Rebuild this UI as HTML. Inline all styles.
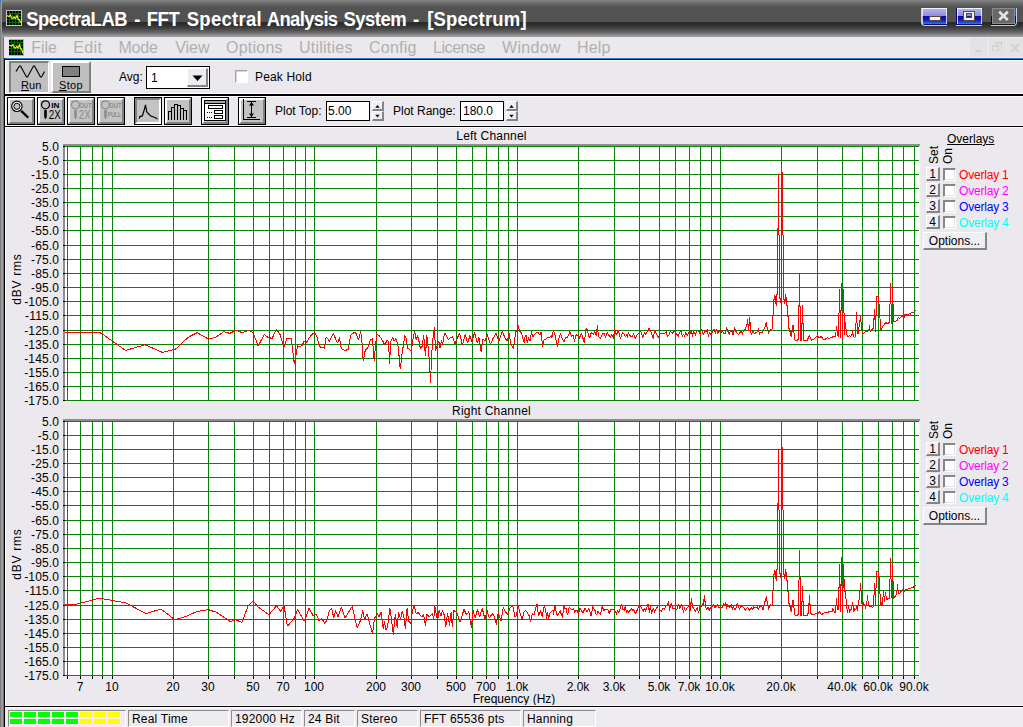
<!DOCTYPE html>
<html><head><meta charset="utf-8"><title>SpectraLAB - FFT Spectral Analysis System - [Spectrum]</title>
<style>
html,body{margin:0;padding:0;}
body{width:1023px;height:727px;overflow:hidden;background:#ebe9ed;font-family:"Liberation Sans",sans-serif;font-size:12px;color:#000;position:relative;}
#root{position:absolute;left:0;top:0;width:1023px;height:727px;overflow:hidden;background:#ebe9ed;}
.abs{position:absolute;}
.t{position:absolute;white-space:nowrap;line-height:14px;height:14px;}
.yl{position:absolute;left:0;width:59.2px;text-align:right;letter-spacing:0.17px;line-height:14px;height:14px;white-space:nowrap;}
.xl{position:absolute;width:60px;margin-left:-30px;text-align:center;line-height:14px;height:14px;white-space:nowrap;}
#title{left:2px;top:0;width:1023px;height:37px;background:linear-gradient(to bottom,#888 0px,#6c6c6c 3px,#5a5a5a 6px,#525252 8px,#525252 22px,#2a2a2a 22px,#2c2c2c 24px,#3a3a3a 27px,#505050 30px,#6e6e6e 33px,#8e8e8e 35px,#a4a4a4 37px);}
.tw{position:absolute;top:7.6px;height:24px;line-height:24px;font-weight:bold;color:#fff;font-size:18.5px;white-space:nowrap;transform:scaleY(1.08);transform-origin:0 19px;}
.menu{position:absolute;top:37px;height:21px;line-height:21px;font-size:16px;color:#b0b0b0;white-space:nowrap;}
.btn{position:absolute;background:#c3c3c3;box-sizing:border-box;}
.raised{border:2px solid;border-color:#fff #808080 #808080 #fff;}
.sunk{border:2px solid;border-color:#808080 #fff #fff #808080;}
.tb{position:absolute;top:97px;width:28px;height:28px;box-sizing:border-box;border:1px solid #000;background:#c3c3c3;}
.tb i{position:absolute;left:0;top:0;right:0;bottom:0;border:2px solid;border-color:#fff #808080 #808080 #fff;}
.tb.dn i{border-color:#808080 #fff #fff #808080;}
.tb svg{position:absolute;left:0;top:0;}
.sp{position:absolute;top:710px;height:17px;box-sizing:border-box;border:1px solid;border-color:#8c8c8c #fff #fff #8c8c8c;}
.sp span{position:absolute;left:3px;top:1px;line-height:14px;font-size:12px;white-space:nowrap;letter-spacing:0.2px;}
.cb{position:absolute;width:13px;height:13px;box-sizing:border-box;background:#fff;border:1px solid;border-color:#878787 #fff #fff #878787;box-shadow:inset 1px 1px 0 #878787, inset -1px -1px 0 #e6e4e8;}
.sb{position:absolute;width:14px;height:14px;box-sizing:border-box;background:#f0eef2;border-style:solid;border-width:1px 2px 2px 1px;border-color:#fff #858585 #858585 #fff;text-align:center;line-height:12px;font-size:12px;}
</style></head><body><div id="root">

<div class="abs" style="left:0;top:0;width:1px;height:727px;background:#7c7c7c"></div>
<div class="abs" style="left:1px;top:0;width:2px;height:727px;background:#9c9c9c"></div>
<div class="abs" style="left:3px;top:0;width:1px;height:727px;background:#707070"></div>
<div class="abs" style="left:0;top:0;width:1px;height:2px;background:#1878dc"></div>
<div id="title" class="abs"></div>
<svg class="abs" style="left:6px;top:10px" width="16" height="16" viewBox="0 0 16 16" shape-rendering="crispEdges">
<rect x="0" y="0" width="16" height="16" fill="#c8c8c8"/><rect x="1" y="1" width="14" height="14" fill="#000"/>
<path d="M3.5 1V15M6.5 1V15M9.5 1V15M12.5 1V15M1 3.5H15M1 6.5H15M1 9.5H15M1 12.5H15" stroke="#006a00" stroke-width="1"/>
<path d="M1 5.5L3 6.5L4.5 5L5.5 8L7 8.5L8 7L9.5 8.5L11 5.5L12 9L13.5 10L14.5 13" stroke="#f0f000" stroke-width="1.2" fill="none" shape-rendering="auto"/>
</svg>
<div class="tw" style="left:26.2px;letter-spacing:-0.49px">SpectraLAB</div>
<div class="tw" style="left:134.2px;letter-spacing:0.00px">-</div>
<div class="tw" style="left:146.7px;letter-spacing:-0.45px">FFT</div>
<div class="tw" style="left:186.7px;letter-spacing:0.28px">Spectral</div>
<div class="tw" style="left:266.7px;letter-spacing:-0.66px">Analysis</div>
<div class="tw" style="left:343.5px;letter-spacing:-0.53px">System</div>
<div class="tw" style="left:412.9px;letter-spacing:0.00px">-</div>
<div class="tw" style="left:427.2px;letter-spacing:0.20px">[Spectrum]</div>
<div class="abs" style="left:921px;top:8px;width:26px;height:18px;box-sizing:border-box;border-left:1px solid #b9d3f7;border-bottom:1px solid #b9d3f7;border-bottom-left-radius:4px;background:#0a0a70"></div>
<div class="abs" style="left:922px;top:8px;width:25px;height:16px;background:linear-gradient(to bottom,#f4f4ff 0,#f4f4ff 1px,#b2b2f0 1px,#8c8ce2 8px,#0a0a98 8px,#1818b4 12px,#1c48d8 14px,#2a7af0 16px);box-shadow:inset 1px 0 0 rgba(255,255,255,.75),inset -1px 0 0 rgba(255,255,255,.75)"></div>
<div class="abs" style="left:929px;top:16px;width:12px;height:5px;box-sizing:border-box;border:1px solid #5a4848;background:#f2f2f2"></div>
<div class="abs" style="left:956px;top:8px;width:26px;height:18px;box-sizing:border-box;border-bottom:1px solid #b9d3f7;background:#0a0a70"></div>
<div class="abs" style="left:957px;top:8px;width:25px;height:16px;background:linear-gradient(to bottom,#f4f4ff 0,#f4f4ff 1px,#b2b2f0 1px,#8c8ce2 8px,#0a0a98 8px,#1818b4 12px,#1c48d8 14px,#2a7af0 16px);box-shadow:inset 1px 0 0 rgba(255,255,255,.75),inset -1px 0 0 rgba(255,255,255,.75)"></div>
<div class="abs" style="left:963px;top:11px;width:12px;height:10px;box-sizing:border-box;border:1px solid #5a4848;background:#f2f2f2"></div>
<div class="abs" style="left:966px;top:13px;width:6px;height:5px;box-sizing:border-box;border:1px solid #5a4848;background:linear-gradient(to bottom,#8c8ce2 0,#8c8ce2 50%,#1414a8 50%)"></div>
<div class="abs" style="left:991px;top:8px;width:26px;height:18px;box-sizing:border-box;border-right:1px solid #b9d3f7;border-bottom:1px solid #b9d3f7;border-bottom-right-radius:4px;background:linear-gradient(to bottom,#555 0,#555 8px,#08084c 8px)"></div>
<div class="abs" style="left:992px;top:8px;width:23px;height:16px;box-sizing:border-box;border:1px solid #8c8c8c;background:#696969"></div>
<div class="abs" style="left:992px;top:24px;width:23px;height:1px;background:#101010"></div>
<svg class="abs" style="left:997px;top:10px" width="13" height="12"><path d="M2.200 1.800L10.800 10M10.800 1.800L2.200 10" stroke="#e4e4e4" stroke-width="2.600" fill="none"/></svg>

<div class="abs" style="left:4px;top:37px;width:1019px;height:21px;background:#ebe9ed"></div>
<svg class="abs" style="left:9px;top:39px" width="15" height="17" viewBox="0 0 15 17" shape-rendering="crispEdges">
<rect x="0" y="0" width="15" height="17" fill="#b0b0b0"/><rect x="0" y="1" width="14" height="15" fill="#000"/>
<path d="M2.5 1V16M5.5 1V16M8.5 1V16M11.5 1V16M0 3.5H14M0 6.5H14M0 9.5H14M0 12.5H14" stroke="#006a00" stroke-width="1"/>
<path d="M0 6L2.5 7L4 5.5L5 8.5L6.5 9L7.5 7.5L9 9L10.5 6L11.5 9.5L13 11L14 14.5" stroke="#f0f000" stroke-width="1.2" fill="none" shape-rendering="auto"/>
</svg>
<div class="menu" style="left:31.3px;letter-spacing:-0.09px">File</div>
<div class="menu" style="left:73.2px;letter-spacing:0.41px">Edit</div>
<div class="menu" style="left:118.4px;letter-spacing:-0.18px">Mode</div>
<div class="menu" style="left:175.3px;letter-spacing:-0.06px">View</div>
<div class="menu" style="left:226.0px;letter-spacing:0.23px">Options</div>
<div class="menu" style="left:299.0px;letter-spacing:0.24px">Utilities</div>
<div class="menu" style="left:369.0px;letter-spacing:0.25px">Config</div>
<div class="menu" style="left:433.0px;letter-spacing:-0.44px">License</div>
<div class="menu" style="left:502.0px;letter-spacing:0.32px">Window</div>
<div class="menu" style="left:577.0px;letter-spacing:0.20px">Help</div>
<div class="abs" style="left:970px;top:38px;width:17px;height:19px;background:#e4e2e6"></div>
<div class="abs" style="left:989px;top:38px;width:17px;height:19px;background:#e4e2e6"></div>
<div class="abs" style="left:1007px;top:38px;width:17px;height:19px;background:#e4e2e6"></div>
<div class="abs" style="left:975px;top:50px;width:6px;height:2px;background:#d4d4c4"></div>
<div class="abs" style="left:992px;top:45px;width:7px;height:6px;border:1px solid #d4d4c4;border-top-width:2px;box-sizing:border-box;"></div><div class="abs" style="left:995px;top:42px;width:7px;height:6px;border:1px solid #d4d4c4;border-top-width:2px;border-left:0;border-bottom:0;box-sizing:border-box;"></div>
<svg class="abs" style="left:1010px;top:43px" width="10" height="10"><path d="M1 1L9 9M9 1L1 9" stroke="#d4d4c4" stroke-width="2"/></svg>
<div class="abs" style="left:4px;top:58px;width:1019px;height:1px;background:#2a7ad8"></div>
<div class="abs" style="left:4px;top:59px;width:1019px;height:1px;background:#000"></div>
<div class="abs" style="left:4px;top:58px;width:1px;height:669px;background:#000"></div>
<div class="abs" style="left:5px;top:60px;width:1px;height:667px;background:#fff"></div>
<div class="abs" style="left:5px;top:60px;width:1018px;height:1px;background:#fff"></div>
<div class="abs" style="left:4px;top:94px;width:1019px;height:2px;background:#000"></div>
<div class="abs" style="left:4px;top:126px;width:1019px;height:1px;background:#000"></div>
<div class="abs" style="left:5px;top:93px;width:1018px;height:1px;background:#fff"></div>
<div class="abs" style="left:5px;top:96px;width:1018px;height:1px;background:#fff"></div>
<div class="abs" style="left:5px;top:125px;width:1018px;height:1px;background:#f8f7f9"></div>
<div class="abs" style="left:5px;top:127px;width:1018px;height:1px;background:#fff"></div>
<div class="btn" style="left:9px;top:61px;width:40px;height:32px;background:#c0c0c0;border-style:solid;border-width:2px 1px 1px 2px;border-color:#808080 #fff #fff #808080"></div>
<svg class="abs" style="left:9px;top:61px" width="40" height="32"><path d="M7 10.500 L10.500 5 L11.500 5 L17.500 16 L18.500 16 L24.500 5 L25.500 5 L31.500 16 L32.500 16 L35.500 10.500" stroke="#000" stroke-width="1.15" fill="none"/></svg>
<div class="t" style="left:21px;top:78px;font-size:11px;letter-spacing:0.1px"><u>R</u>un</div>
<div class="btn" style="left:51px;top:61px;width:40px;height:32px;background:#c0c0c0;border-style:solid;border-width:2px;border-color:#fff #808080 #808080 #fff"></div>
<div class="abs" style="left:62px;top:66px;width:18px;height:11px;box-sizing:border-box;border:1px solid #000;background:#808080"></div>
<div class="t" style="left:59px;top:78px;font-size:11px;letter-spacing:0.3px"><u>S</u>top</div>

<div class="t" style="left:119px;top:70px">Avg:</div>
<div class="abs" style="left:146px;top:66px;width:64px;height:23px;box-sizing:border-box;border:1px solid #000;background:#fff"></div>
<div class="t" style="left:151px;top:71px;font-size:12px">1</div>
<div class="abs" style="left:187px;top:68px;width:21px;height:19px;box-sizing:border-box;border-style:solid;border-width:1px 2px 2px 1px;border-color:#fff #858585 #858585 #fff;background:#eeecf0"></div>
<svg class="abs" style="left:192px;top:75px" width="11" height="7"><path d="M0.5 0.5H10.5L5.5 6Z" fill="#000"/></svg>
<div class="cb" style="left:235px;top:70px;width:13px;height:13px;border-color:#a4a4a4 #fff #fff #a4a4a4;box-shadow:inset 1px 1px 0 #d8d6da"></div>
<div class="t" style="left:255px;top:70px;letter-spacing:0.15px">Peak Hold</div>

<div class="tb " style="left:7px"><i></i><svg width="26" height="26" viewBox="0 0 26 26"><circle cx="8.9" cy="8.3" r="5.2" fill="#fff" stroke="#000" stroke-width="1.2"/><circle cx="8.900" cy="8.300" r="3.1" fill="#c3c3c3" stroke="#000" stroke-width="1"/><path d="M13.2 12.900L20.3 19.800" stroke="#000" stroke-width="2.3"/></svg></div>
<div class="tb " style="left:37px"><i></i><svg width="26" height="26" viewBox="0 0 26 26"><circle cx="7.5" cy="6.8" r="4" fill="none" stroke="#000" stroke-width="1.2"/><path d="M6.200 12H8.800V19L7.500 21.500L6.200 19Z" fill="#000"/><text x="13.2" y="9.500" font-size="7" font-weight="bold" fill="#000" font-family="Liberation Sans, sans-serif" textLength="8.200" lengthAdjust="spacingAndGlyphs">IN</text><text x="10.800" y="21.300" font-size="12" fill="#000" font-family="Liberation Sans, sans-serif" textLength="12" lengthAdjust="spacingAndGlyphs">2X</text></svg></div>
<div class="tb " style="left:67px"><i></i><svg width="26" height="26" viewBox="0 0 26 26"><circle cx="7.5" cy="6.8" r="4" fill="none" stroke="#8c8c8c" stroke-width="1.2"/><path d="M6.200 12H8.800V19L7.500 21.500L6.200 19Z" fill="#8c8c8c"/><text x="11.2" y="9.500" font-size="7" font-weight="bold" fill="#8c8c8c" font-family="Liberation Sans, sans-serif" textLength="12.500" lengthAdjust="spacingAndGlyphs">OUT</text><text x="10.800" y="21.300" font-size="12" fill="#8c8c8c" font-family="Liberation Sans, sans-serif" textLength="12" lengthAdjust="spacingAndGlyphs">2X</text></svg></div>
<div class="tb " style="left:97px"><i></i><svg width="26" height="26" viewBox="0 0 26 26"><circle cx="7.5" cy="6.8" r="4" fill="none" stroke="#8c8c8c" stroke-width="1.2"/><path d="M6.200 12H8.800V19L7.500 21.500L6.200 19Z" fill="#8c8c8c"/><text x="11.2" y="9.500" font-size="7" font-weight="bold" fill="#8c8c8c" font-family="Liberation Sans, sans-serif" textLength="12.500" lengthAdjust="spacingAndGlyphs">OUT</text><text x="9.800" y="18.900" font-size="7" font-weight="bold" fill="#8c8c8c" font-family="Liberation Sans, sans-serif" textLength="13.500" lengthAdjust="spacingAndGlyphs">FULL</text></svg></div>
<div class="tb dn" style="left:134px"><i></i><svg width="26" height="26" viewBox="0 0 26 26"><path d="M4.300 20.600L4.900 18.600L7.300 17.900L8.700 13.800L10.500 6.900L11.700 13.800L14.200 16.500L16.200 18.200L19.600 19.300L22.400 20.900" stroke="#000" stroke-width="1.2" fill="none"/></svg></div>
<div class="tb " style="left:164px"><i></i><svg width="26" height="26" viewBox="0 0 26 26"><path d="M3.500 22V13.500H6.500V22M6.500 13.500V9.500H9.500V22M9.500 9.500V6.500H12.500V22M12.500 7.500H15.500V22M15.500 10.500H18.500V22M18.500 12.500H21.500V22" stroke="#000" stroke-width="1" fill="none" shape-rendering="crispEdges"/></svg></div>
<div class="tb " style="left:201px"><i></i><svg width="26" height="26" viewBox="0 0 26 26"><rect x="2.500" y="2.500" width="21" height="20" fill="#fff" stroke="#000" stroke-width="1" shape-rendering="crispEdges"/><rect x="3" y="3" width="20" height="2" fill="#a4a4a4" shape-rendering="crispEdges"/><path d="M3 5.500H23" stroke="#000" shape-rendering="crispEdges"/><rect x="6.500" y="7.500" width="14" height="3" fill="#fff" stroke="#000" shape-rendering="crispEdges"/><rect x="12.500" y="12.500" width="8" height="3" fill="#fff" stroke="#000" shape-rendering="crispEdges"/><rect x="12.500" y="17.500" width="8" height="3" fill="#fff" stroke="#000" shape-rendering="crispEdges"/><path d="M5 14.500H10M5 19.500H10" stroke="#000" stroke-dasharray="1 1" shape-rendering="crispEdges"/></svg></div>
<div class="tb " style="left:238px"><i></i><svg width="26" height="26" viewBox="0 0 26 26"><path d="M4.500 1V21.500H21" stroke="#000" fill="none" shape-rendering="crispEdges"/><path d="M8 3.500H17M8 19.500H17M12.500 4V19" stroke="#000" fill="none" shape-rendering="crispEdges"/><path d="M10 7.500L12.500 4L15 7.500ZM10 15.500L12.500 19L15 15.500Z" fill="#000"/></svg></div>
<div class="t" style="left:275px;top:104px">Plot Top:</div>
<div class="abs" style="left:326px;top:101px;width:44px;height:20px;box-sizing:border-box;border:1px solid #000;background:#fff"></div>
<div class="t" style="left:328px;top:104px">5.00</div>
<div class="abs" style="left:372px;top:101px;width:12px;height:10px;box-sizing:border-box;border-style:solid;border-width:1px 2px 2px 1px;border-color:#fff #858585 #858585 #fff;background:#f0eef2"></div>
<div class="abs" style="left:372px;top:111px;width:12px;height:10px;box-sizing:border-box;border-style:solid;border-width:1px 2px 2px 1px;border-color:#fff #858585 #858585 #fff;background:#f0eef2"></div>
<svg class="abs" style="left:372px;top:101px" width="11" height="20"><path d="M3.300 6.700L5.500 3.900L7.700 6.700ZM3.300 13.800L5.500 16.600L7.700 13.800Z" fill="#000"/></svg>
<div class="t" style="left:393px;top:104px">Plot Range:</div>
<div class="abs" style="left:460px;top:101px;width:44px;height:20px;box-sizing:border-box;border:1px solid #000;background:#fff"></div>
<div class="t" style="left:463px;top:104px">180.0</div>
<div class="abs" style="left:506px;top:101px;width:12px;height:10px;box-sizing:border-box;border-style:solid;border-width:1px 2px 2px 1px;border-color:#fff #858585 #858585 #fff;background:#f0eef2"></div>
<div class="abs" style="left:506px;top:111px;width:12px;height:10px;box-sizing:border-box;border-style:solid;border-width:1px 2px 2px 1px;border-color:#fff #858585 #858585 #fff;background:#f0eef2"></div>
<svg class="abs" style="left:506px;top:101px" width="11" height="20"><path d="M3.300 6.700L5.500 3.900L7.700 6.700ZM3.300 13.800L5.500 16.600L7.700 13.800Z" fill="#000"/></svg>

<svg class="abs" style="left:0;top:0" width="1023" height="727" viewBox="0 0 1023 727">
<rect x="65" y="146" width="854" height="255" fill="#fff"/>
<rect x="65" y="401" width="854" height="1" fill="#f4edf5"/>
<rect x="919" y="146" width="1" height="256" fill="#f6f5f7"/>
<rect x="920" y="146" width="1" height="256" fill="#eeecf0"/>
<rect x="63" y="144" width="857" height="2" fill="#908d91"/>
<rect x="63" y="144" width="2" height="257" fill="#908d91"/>
<path d="M65 146.5H919M65 160.5H919M65 174.5H919M65 188.5H919M65 202.5H919M65 216.5H919M65 230.5H919M65 245.5H919M65 259.5H919M65 273.5H919M65 287.5H919M65 301.5H919M65 315.5H919M65 330.5H919M65 344.5H919M65 358.5H919M65 372.5H919M65 386.5H919M65 400.5H919M67.5 146V401M80.5 146V401M92.5 146V401M102.5 146V401M112.5 146V401M173.5 146V401M208.5 146V401M234.5 146V401M253.5 146V401M269.5 146V401M283.5 146V401M295.5 146V401M305.5 146V401M314.5 146V401M376.5 146V401M411.5 146V401M437.5 146V401M456.5 146V401M472.5 146V401M486.5 146V401M498.5 146V401M508.5 146V401M517.5 146V401M578.5 146V401M614.5 146V401M639.5 146V401M659.5 146V401M675.5 146V401M689.5 146V401M700.5 146V401M711.5 146V401M720.5 146V401M781.5 146V401M817.5 146V401M842.5 146V401M862.5 146V401M878.5 146V401M892.5 146V401M903.5 146V401M914.5 146V401" stroke="#078207" stroke-width="1" fill="none" shape-rendering="crispEdges"/>
<path d="M63 146.5H65M63 160.5H65M63 174.5H65M63 188.5H65M63 202.5H65M63 216.5H65M63 230.5H65M63 245.5H65M63 259.5H65M63 273.5H65M63 287.5H65M63 301.5H65M63 315.5H65M63 330.5H65M63 344.5H65M63 358.5H65M63 372.5H65M63 386.5H65M63 400.5H65" stroke="#000" stroke-width="1" fill="none" shape-rendering="crispEdges"/>
<path d="M64.5 332.4 L99.4 332.4 L103.2 334.6 L112.1 341.0 L125.6 350.4 L145.1 344.8 L162.4 352.4 L175.6 349.1 L188.3 337.2 L197.2 332.6 L208.2 339.0 L215.0 337.7 L223.9 331.6 L229.8 333.4 L235.9 330.3 L242.2 332.6 L248.8 330.3 L253.1 332.6 L258.2 346.1 L264.1 334.6 L267.9 337.2 L272.2 338.5 L276.3 329.0 L280.1 334.6 L283.9 347.3 L286.9 338.5 L291.3 338.5 L294.3 364.4 L297.6 345.6 L300.0 346.9 L302.2 345.2 L304.3 340.9 L306.0 343.0 L310.8 335.5 L314.6 332.3 L316.8 336.6 L319.4 346.2 L321.5 347.7 L323.2 346.9 L324.3 348.4 L326.2 337.0 L328.0 338.7 L329.5 341.3 L333.3 333.3 L335.5 338.7 L337.6 343.0 L339.4 337.6 L341.3 348.4 L344.7 350.5 L348.4 349.5 L350.5 335.5 L354.4 332.3 L355.9 333.3 L358.5 339.8 L360.6 331.2 L361.9 340.9 L363.2 361.3 L365.2 350.5 L367.1 348.4 L368.4 346.2 L370.5 339.8 L372.5 338.7 L374.2 361.3 L375.7 343.0 L377.0 334.4 L379.6 336.1 L381.7 339.1 L384.9 345.2 L387.1 339.8 L388.6 341.9 L389.5 364.1 L390.8 341.9 L392.5 337.6 L394.2 340.9 L395.7 338.7 L397.8 344.1 L399.4 359.1 L400.2 369.2 L402.2 352.7 L404.9 335.5 L406.5 338.7 L407.5 348.4 L409.7 349.5 L411.4 351.6 L412.3 343.0 L414.6 330.8 L416.1 339.8 L417.8 335.5 L420.4 348.4 L422.2 346.2 L423.7 335.5 L425.4 355.9 L426.9 335.5 L428.4 349.5 L429.5 362.4 L430.5 383.4 L431.6 355.9 L432.9 338.7 L434.4 327.5 L435.5 350.5 L437.0 346.2 L438.7 340.9 L440.2 348.4 L441.5 339.8 L442.6 345.2 L444.5 332.7 L446.2 335.5 L448.4 339.8 L450.5 337.6 L452.7 336.6 L454.8 344.1 L457.0 338.7 L459.6 333.3 L462.4 345.2 L465.2 334.4 L467.7 343.0 L469.9 335.5 L472.0 341.9 L474.6 332.3 L477.4 343.0 L478.9 337.6 L481.1 351.6 L482.8 338.7 L484.9 340.9 L487.1 334.4 L490.3 344.1 L493.5 337.6 L496.1 333.3 L498.9 340.9 L502.2 331.2 L505.4 338.7 L507.5 340.9 L509.0 333.3 L510.8 344.1 L513.3 348.4 L516.1 330.1 L516.4 331.6 L517.6 330.9 L518.3 325.4 L519.5 330.9 L521.5 332.8 L522.6 337.9 L524.4 343.4 L525.2 335.5 L526.2 334.8 L527.3 343.4 L528.5 337.5 L530.1 341.4 L531.6 331.2 L532.6 337.1 L534.4 334.8 L536.5 332.4 L538.3 332.6 L539.7 335.2 L541.0 332.4 L542.6 346.5 L543.5 340.2 L545.3 339.8 L547.3 337.5 L549.6 337.5 L551.2 335.5 L551.8 338.3 L553.1 331.2 L554.5 332.8 L555.9 339.5 L557.4 346.5 L558.8 338.7 L560.4 333.6 L562.1 338.3 L564.3 342.2 L565.6 337.1 L567.6 337.1 L569.9 331.6 L571.7 336.7 L573.1 334.8 L574.5 341.4 L576.0 334.8 L577.8 335.5 L579.3 338.7 L581.3 332.8 L583.2 339.1 L584.4 343.4 L585.6 330.5 L586.5 327.7 L587.9 332.4 L589.5 338.3 L591.2 332.8 L593.4 334.4 L595.0 331.6 L596.4 335.5 L596.8 330.5 L597.6 325.4 L598.2 335.5 L600.3 338.7 L602.3 334.0 L604.2 332.8 L605.5 337.5 L607.3 332.4 L608.9 335.5 L610.5 337.5 L611.6 334.0 L613.6 338.7 L614.6 328.5 L616.5 335.2 L618.3 330.5 L620.4 338.7 L622.4 332.6 L624.1 334.4 L625.6 336.5 L626.6 334.4 L627.4 337.5 L628.4 332.6 L630.4 336.3 L632.4 337.1 L633.5 333.6 L635.5 338.7 L637.0 334.8 L638.6 333.6 L640.6 331.2 L642.9 337.5 L644.5 332.6 L645.6 334.4 L648.0 330.5 L649.0 328.5 L650.7 331.6 L652.1 335.2 L653.5 338.7 L654.5 330.5 L656.2 333.6 L658.5 337.5 L660.1 333.6 L662.5 333.4 L664.8 333.4 L666.2 331.6 L667.5 336.5 L669.1 334.8 L670.3 331.6 L672.2 333.4 L674.6 330.9 L676.9 334.3 L678.4 336.5 L679.6 332.1 L681.0 331.4 L682.5 336.5 L683.5 333.8 L684.5 336.5 L685.9 332.6 L687.4 336.3 L688.6 332.6 L689.7 334.6 L691.5 330.4 L692.5 336.5 L693.5 330.7 L695.5 335.6 L696.4 331.6 L697.4 330.4 L699.4 331.9 L700.4 335.6 L701.3 329.2 L702.8 333.1 L703.5 334.6 L704.5 330.7 L705.7 332.1 L707.3 329.2 L708.4 336.5 L709.4 332.4 L711.3 335.6 L712.6 331.2 L714.3 329.2 L715.4 333.4 L716.5 329.2 L717.5 333.4 L718.9 331.6 L720.4 329.4 L721.6 332.4 L722.2 330.6 L723.6 333.6 L725.4 333.3 L726.4 327.4 L727.4 330.0 L729.2 334.4 L730.7 330.6 L731.8 330.9 L733.3 335.3 L734.5 327.4 L735.6 330.9 L738.6 334.7 L741.2 330.6 L742.4 334.4 L743.3 331.2 L744.6 329.2 L745.6 330.3 L746.4 324.5 L747.1 324.5 L747.4 319.5 L748.1 324.5 L748.8 330.6 L749.4 317.4 L750.3 324.5 L750.7 332.4 L751.5 334.4 L752.7 331.2 L754.4 333.6 L756.5 332.4 L757.6 331.2 L758.5 328.3 L759.4 334.4 L760.9 331.8 L762.3 332.7 L764.4 328.6 L765.6 324.8 L766.4 322.4 L766.9 326.8 L767.6 327.4 L768.4 333.6 L769.7 330.9 L771.1 329.5 L772.5 328.6 L772.5 315.0 L773.5 315.0 L773.5 299.0 L774.5 299.0 L774.5 295.0 L775.5 298.0 L775.5 302.6 L776.5 305.6 L776.5 294.0 L777.5 294.0 L777.5 228.0 L778.5 228.0 L778.5 174.0 L778.5 235.0 L779.5 235.0 L779.5 298.7 L780.5 298.2 L780.5 302.6 L781.5 298.0 L781.5 233.0 L782.5 233.0 L782.5 172.0 L782.5 235.0 L783.5 235.0 L783.5 299.3 L784.5 299.0 L784.5 303.9 L785.5 299.3 L785.5 294.0 L786.5 299.0 L786.5 305.7 L787.5 305.7 L787.5 316.6 L788.5 316.6 L788.5 328.2 L789.5 328.2 L789.5 331.5 L790.5 331.5 L790.5 334.8 L791.5 336.4 L791.5 331.0 L792.5 331.0 L792.5 326.0 L793.5 325.0 L793.5 333.0 L794.5 333.0 L794.5 339.2 L795.5 340.3 L796.5 341.0 L797.5 340.0 L798.5 339.7 L798.5 305.0 L799.5 306.8 L799.5 273.8 L799.5 306.8 L800.5 306.8 L800.5 340.8 L801.5 340.8 L801.5 323.0 L802.5 323.0 L802.5 305.0 L802.5 323.0 L803.5 323.0 L803.5 340.3 L804.5 340.0 L805.5 340.5 L807.0 340.8 L809.5 335.3 L811.5 340.3 L813.7 339.2 L815.9 337.0 L817.5 335.3 L819.0 338.0 L821.4 336.4 L823.0 339.2M823.0 339.2 L825.5 339.1 L827.5 337.8 L829.6 338.4 L830.5 337.7 L832.5 337.0 L834.5 336.7 L835.5 336.7M847.5 337.2 L849.5 335.8 L851.0 336.2 L852.5 333.8M862.5 333.3 L863.7 333.3 L865.7 331.0 L867.0 331.9 L868.5 329.5 L869.5 329.5 L870.5 331.4 L871.5 330.5 L872.5 328.5 L873.5 328.0M880.5 329.5 L881.5 329.5 L882.5 327.1 L883.5 325.6 L884.8 323.7 L886.0 322.7 L887.7 323.7 L888.6 322.7 L889.5 322.3M893.5 321.3 L894.5 321.8 L895.9 321.3 L897.3 320.3 L898.3 317.4 L899.7 318.4 L901.2 317.0 L902.6 316.0 L903.6 314.6 L904.5 314.6M904.5 314.6 L905.5 314.6 L906.7 314.3 L908.0 315.2 L909.4 313.6 L910.5 314.2 L911.5 312.3 L913.0 312.8 L914.9 310.9 L916.3 310.2M835.5 331.9V337.0M836.5 326.1V331.4M837.5 331.4V336.2M838.5 313.1V336.7M839.5 289.0V313.1M840.5 310.2V337.7M841.5 282.9V310.7M842.5 311.2V338.7M843.5 289.0V313.1M844.5 313.0V335.3M845.5 322.3V328.5M846.5 328.5V335.3M847.5 335.3V337.2M852.5 329.5V333.8M853.5 333.8V336.7M854.5 336.7V337.7M855.5 323.2V337.0M856.5 312.1V323.2M857.5 323.0V333.8M858.5 327.0V333.8M859.5 319.9V327.0M860.5 316.0V322.3M861.5 322.3V330.9M862.5 330.9V333.3M869.5 325.2V329.5M873.5 317.9V328.0M874.5 309.3V320.3M875.5 314.6V331.9M876.5 296.2V314.6M877.5 296.2V297.2M878.5 296.2V303.5M879.5 303.5V318.4M880.5 319.4V329.5M889.5 303.5V322.3M890.5 283.2V304.0M891.5 304.0V323.7M892.5 288.0V304.4M893.5 304.4V321.3M904.5 314.6V318.4" stroke="#ff0000" stroke-width="1" fill="none" stroke-linejoin="bevel" shape-rendering="crispEdges"/>
<rect x="65" y="421" width="854" height="255" fill="#fff"/>
<rect x="65" y="676" width="854" height="1" fill="#f4edf5"/>
<rect x="919" y="421" width="1" height="256" fill="#f6f5f7"/>
<rect x="920" y="421" width="1" height="256" fill="#eeecf0"/>
<rect x="63" y="419" width="857" height="2" fill="#908d91"/>
<rect x="63" y="419" width="2" height="257" fill="#908d91"/>
<path d="M65 421.5H919M65 435.5H919M65 449.5H919M65 463.5H919M65 477.5H919M65 491.5H919M65 505.5H919M65 520.5H919M65 534.5H919M65 548.5H919M65 562.5H919M65 576.5H919M65 590.5H919M65 605.5H919M65 619.5H919M65 633.5H919M65 647.5H919M65 661.5H919M65 675.5H919M67.5 421V676M80.5 421V676M92.5 421V676M102.5 421V676M112.5 421V676M173.5 421V676M208.5 421V676M234.5 421V676M253.5 421V676M269.5 421V676M283.5 421V676M295.5 421V676M305.5 421V676M314.5 421V676M376.5 421V676M411.5 421V676M437.5 421V676M456.5 421V676M472.5 421V676M486.5 421V676M498.5 421V676M508.5 421V676M517.5 421V676M578.5 421V676M614.5 421V676M639.5 421V676M659.5 421V676M675.5 421V676M689.5 421V676M700.5 421V676M711.5 421V676M720.5 421V676M781.5 421V676M817.5 421V676M842.5 421V676M862.5 421V676M878.5 421V676M892.5 421V676M903.5 421V676M914.5 421V676" stroke="#078207" stroke-width="1" fill="none" shape-rendering="crispEdges"/>
<path d="M63 421.5H65M63 435.5H65M63 449.5H65M63 463.5H65M63 477.5H65M63 491.5H65M63 505.5H65M63 520.5H65M63 534.5H65M63 548.5H65M63 562.5H65M63 576.5H65M63 590.5H65M63 605.5H65M63 619.5H65M63 633.5H65M63 647.5H65M63 661.5H65M63 675.5H65" stroke="#000" stroke-width="1" fill="none" shape-rendering="crispEdges"/>
<path d="M64.5 604.6 L75.2 604.6 L99.4 598.2 L125.6 602.8 L145.9 613.5 L161.1 609.1 L174.9 619.8 L185.8 616.5 L197.2 611.4 L208.2 609.6 L216.3 612.2 L230.3 621.6 L235.4 619.8 L242.0 622.3 L248.1 605.8 L253.1 600.7 L258.2 607.1 L268.9 614.7 L276.5 605.8 L280.6 611.4 L284.1 605.8 L287.4 626.2 L293.8 619.0 L297.6 609.6 L300.0 613.7 L304.3 621.2 L309.0 608.3 L313.3 615.9 L316.1 614.4 L319.4 621.2 L321.5 618.0 L324.7 623.4 L326.9 620.2 L329.5 610.5 L331.6 608.3 L333.8 618.0 L335.5 610.5 L338.1 616.9 L341.3 607.3 L345.2 618.0 L349.0 611.6 L352.3 606.2 L354.8 618.0 L357.2 627.7 L360.2 621.2 L362.8 610.5 L364.5 620.2 L367.1 613.7 L369.9 624.5 L372.5 633.5 L374.6 618.0 L377.4 613.7 L379.1 616.9 L381.1 611.6 L383.2 628.8 L384.5 621.2 L385.6 629.8 L387.5 627.7 L389.9 608.3 L391.4 619.1 L393.3 634.6 L395.3 613.7 L397.2 627.7 L398.5 612.6 L400.6 619.1 L402.2 611.6 L403.9 616.9 L405.4 628.8 L407.1 608.3 L408.6 621.2 L410.8 623.4 L412.3 611.6 L414.0 605.1 L416.1 613.7 L418.3 612.6 L421.5 616.9 L423.7 614.8 L425.4 625.5 L426.9 613.7 L429.0 616.9 L432.3 613.7 L433.8 619.1 L434.8 606.2 L436.6 615.9 L437.6 621.2 L439.1 610.5 L440.9 615.9 L442.4 610.5 L444.1 614.8 L445.8 626.6 L447.5 612.6 L449.5 625.5 L451.2 611.6 L452.3 626.6 L453.8 610.5 L457.0 612.6 L460.2 622.3 L463.9 609.4 L466.7 614.8 L468.8 611.6 L471.4 627.7 L473.1 610.5 L475.3 618.0 L477.4 609.4 L479.6 616.9 L482.2 608.3 L484.9 619.1 L487.1 610.5 L489.2 618.0 L492.5 613.7 L494.6 616.9 L496.3 624.5 L498.3 612.6 L501.1 621.2 L503.2 607.3 L505.4 611.6 L507.5 614.8 L510.3 607.3 L512.9 606.2 L515.1 616.9 L516.4 615.2 L518.3 606.6 L519.9 612.5 L522.3 619.5 L523.8 612.5 L525.2 610.5 L527.3 612.5 L529.3 616.0 L530.5 621.5 L532.4 613.7 L534.4 614.5 L535.5 607.8 L537.0 604.4 L538.7 616.4 L540.4 610.5 L542.4 617.2 L543.5 607.8 L544.5 605.5 L546.1 613.7 L546.6 618.8 L547.7 611.7 L548.4 619.5 L549.6 613.7 L551.8 611.3 L553.1 609.8 L553.5 614.5 L554.9 605.5 L556.7 614.5 L557.8 615.2 L560.2 610.5 L561.3 614.5 L562.5 617.6 L563.7 605.9 L564.9 608.6 L566.0 607.8 L567.4 615.2 L569.2 607.6 L572.3 610.2 L573.5 607.8 L574.6 612.5 L576.0 609.8 L577.8 611.3 L578.5 616.0 L579.7 607.8 L581.7 611.3 L583.4 613.3 L584.6 607.8 L587.1 612.1 L588.7 607.8 L591.2 616.4 L592.8 606.6 L595.0 610.5 L596.4 615.2 L598.0 611.5 L600.5 614.5 L601.6 608.6 L602.6 605.5 L603.4 611.3 L604.6 609.5 L607.7 609.5 L609.4 613.7 L610.5 609.8 L613.6 609.8 L615.2 611.3 L616.5 614.5 L617.5 609.8 L618.7 613.3 L620.2 608.6 L621.4 604.4 L623.0 609.4 L624.5 610.5 L625.3 605.5 L626.5 613.3 L627.3 609.8 L628.4 612.5 L630.0 610.5 L631.6 608.6 L632.7 610.9 L633.9 609.8 L635.5 613.7 L637.4 609.8 L639.0 606.2 L640.4 605.5 L641.7 608.6 L643.3 611.5 L644.6 607.8 L645.6 611.5 L646.8 607.4 L648.0 604.4 L649.6 612.5 L650.3 605.5 L651.5 613.7 L653.5 607.8 L654.5 612.5 L656.2 608.6 L657.8 606.2 L659.5 605.1 L659.7 609.8 L661.3 611.5 L663.2 607.8 L664.4 609.8 L665.6 605.9 L667.3 605.5 L668.5 601.6 L669.5 610.5 L671.2 603.5 L673.0 608.6 L676.9 609.1 L678.5 604.4 L679.6 608.4 L680.6 607.6 L681.5 604.3 L682.5 607.1 L683.5 612.5 L684.5 607.6 L685.4 611.3 L686.7 608.6 L688.6 606.4 L689.6 608.6 L690.5 610.6 L690.6 604.4 L691.5 598.3 L692.0 603.5 L692.8 603.7 L693.0 607.6 L695.5 611.5 L696.4 608.6 L697.4 607.6 L698.4 612.5 L699.6 609.6 L700.0 605.7 L701.3 606.4 L702.8 603.5 L703.5 605.2 L703.8 600.3 L704.5 595.4 L704.8 601.3 L705.6 601.5 L705.7 607.6 L706.5 609.6 L707.7 607.1 L708.4 607.9 L709.4 610.6 L710.1 607.1 L711.5 610.6 L711.8 607.9 L712.6 605.7 L713.4 604.3 L714.5 607.1 L715.5 607.4 L717.5 604.3 L718.9 607.4 L720.4 608.4 L721.6 607.4 L721.9 606.8 L722.5 608.3 L723.5 603.6 L724.5 606.2 L725.4 602.4 L726.3 605.6 L726.6 609.4 L727.4 604.5 L728.6 605.9 L729.8 607.4 L731.4 604.5 L732.4 609.4 L733.3 606.5 L734.5 609.2 L735.4 610.3 L736.5 605.6 L737.4 603.3 L738.6 606.8 L739.5 609.4 L740.6 606.5 L742.1 606.2 L744.2 608.0 L745.3 610.3 L747.4 607.4 L749.4 610.3 L751.5 607.7 L752.5 610.3 L753.5 606.8 L756.5 608.0 L757.3 606.2 L758.3 609.4 L759.7 606.8 L761.5 605.6 L762.6 609.4 L763.5 609.2 L764.6 602.4 L765.6 600.4 L766.4 596.2 L766.9 600.9 L767.6 601.5 L768.4 609.4 L769.7 606.2 L770.8 604.5 L771.7 605.9 L772.5 603.6 L772.5 590.0 L773.5 590.0 L773.5 574.0 L774.5 574.0 L774.5 570.0 L775.5 573.0 L775.5 577.6 L776.5 580.6 L776.5 569.0 L777.5 569.0 L777.5 503.0 L778.5 503.0 L778.5 449.0 L778.5 510.0 L779.5 510.0 L779.5 573.7 L780.5 573.2 L780.5 577.6 L781.5 573.0 L781.5 508.0 L782.5 508.0 L782.5 447.0 L782.5 510.0 L783.5 510.0 L783.5 574.3 L784.5 574.0 L784.5 578.9 L785.5 574.3 L785.5 569.0 L786.5 574.0 L786.5 580.7 L787.5 580.7 L787.5 591.6 L788.5 591.6 L788.5 603.2 L789.5 603.2 L789.5 606.5 L790.5 606.5 L790.5 609.8 L791.5 611.4 L791.5 606.0 L792.5 606.0 L792.5 601.0 L793.5 600.0 L793.5 608.0 L794.5 608.0 L794.5 614.2 L795.5 615.3 L796.5 616.0 L797.5 615.0 L798.5 614.7 L798.5 582.9 L799.5 577.0 L799.5 550.1 L799.5 577.0 L800.5 577.0 L800.5 615.8 L801.5 615.8 L801.5 601.0 L802.5 601.0 L802.5 586.2 L802.5 601.0 L803.5 601.0 L803.5 615.3 L804.5 615.0 L805.5 615.5 L807.0 615.8 L808.5 612.5 L808.5 603.7 L809.5 603.7 L809.5 595.0 L809.5 604.8 L810.5 604.8 L810.5 613.0 L812.0 614.7 L814.0 615.0 L815.9 613.0 L817.5 614.8 L819.4 611.4 L821.4 615.0 L823.0 613.6M823.0 613.6 L825.5 612.0 L827.6 612.7 L829.6 611.0 L830.5 611.2 L831.5 611.2 L832.5 611.0M832.5 608.3 L833.5 610.3 L834.5 612.2 L835.5 612.0M849.5 612.7 L850.5 609.8 L851.5 609.8M868.5 605.9 L869.9 606.4 L871.3 606.0 L872.5 607.4 L873.5 606.4M886.5 599.7 L887.7 598.7 L888.6 598.2 L889.5 598.2M893.5 598.7 L894.5 597.3 L895.9 594.9 L896.5 594.0M898.5 594.4 L899.5 593.4 L900.7 592.0 L902.1 589.6 L903.6 591.0 L904.6 592.0 L905.5 589.6 L906.7 590.0 L908.0 589.0 L909.4 588.0 L910.5 588.5 L911.5 587.3 L913.0 587.6 L914.9 585.9 L916.3 585.2M832.5 608.3V611.0M835.5 605.5V612.0M836.5 598.2V606.0M837.5 606.0V609.8M838.5 587.1V609.8M839.5 564.0V587.6M840.5 584.3V611.7M841.5 557.0V585.7M842.5 585.7V613.7M843.5 564.0V588.1M844.5 578.5V591.5M845.5 590.5V598.7M846.5 599.2V608.8M847.5 608.8V612.7M848.5 605.5V609.3M849.5 609.3V612.7M851.5 606.4V609.8M852.5 602.1V606.4M853.5 606.4V611.7M854.5 607.9V611.0M855.5 608.8V610.3M856.5 604.5V608.8M857.5 606.0V610.8M858.5 600.2V606.0M859.5 590.5V600.2M860.5 583.3V590.5M861.5 590.5V603.5M862.5 603.5V609.8M863.5 602.1V605.5M864.5 603.5V605.0M865.5 605.0V608.8M866.5 601.1V606.4M867.5 595.3V601.1M868.5 601.1V605.9M873.5 595.3V606.4M874.5 583.3V595.3M875.5 587.6V605.0M876.5 571.2V588.1M877.5 571.2V572.2M878.5 571.2V577.0M879.5 577.0V593.9M880.5 593.9V605.5M881.5 601.6V605.5M882.5 597.3V604.5M883.5 590.5V597.3M884.5 595.8V601.6M885.5 592.4V596.3M886.5 596.3V599.7M889.5 578.5V598.2M890.5 558.2V578.5M891.5 578.5V598.2M892.5 562.6V580.9M893.5 581.4V598.7M896.5 589.6V594.0M897.5 584.3V589.6M898.5 589.6V594.4" stroke="#ff0000" stroke-width="1" fill="none" stroke-linejoin="bevel" shape-rendering="crispEdges"/>
<path d="M67.5 676V679M80.5 676V679M92.5 676V679M102.5 676V679M112.5 676V679M173.5 676V679M208.5 676V679M234.5 676V679M253.5 676V679M269.5 676V679M283.5 676V679M295.5 676V679M305.5 676V679M314.5 676V679M376.5 676V679M411.5 676V679M437.5 676V679M456.5 676V679M472.5 676V679M486.5 676V679M498.5 676V679M508.5 676V679M517.5 676V679M578.5 676V679M614.5 676V679M639.5 676V679M659.5 676V679M675.5 676V679M689.5 676V679M700.5 676V679M711.5 676V679M720.5 676V679M781.5 676V679M817.5 676V679M842.5 676V679M862.5 676V679M878.5 676V679M892.5 676V679M903.5 676V679M914.5 676V679" stroke="#000" stroke-width="1" fill="none" shape-rendering="crispEdges"/>
</svg>
<div class="t" style="left:391.500px;top:129px;width:200px;text-align:center;letter-spacing:0.2px">Left Channel</div>
<div class="t" style="left:391.500px;top:404px;width:200px;text-align:center;letter-spacing:0.22px">Right Channel</div>
<div class="yl" style="top:140px">5.0</div>
<div class="yl" style="top:154px">-5.0</div>
<div class="yl" style="top:168px">-15.0</div>
<div class="yl" style="top:182px">-25.0</div>
<div class="yl" style="top:196px">-35.0</div>
<div class="yl" style="top:210px">-45.0</div>
<div class="yl" style="top:224px">-55.0</div>
<div class="yl" style="top:239px">-65.0</div>
<div class="yl" style="top:253px">-75.0</div>
<div class="yl" style="top:267px">-85.0</div>
<div class="yl" style="top:281px">-95.0</div>
<div class="yl" style="top:295px">-105.0</div>
<div class="yl" style="top:309px">-115.0</div>
<div class="yl" style="top:324px">-125.0</div>
<div class="yl" style="top:338px">-135.0</div>
<div class="yl" style="top:352px">-145.0</div>
<div class="yl" style="top:366px">-155.0</div>
<div class="yl" style="top:380px">-165.0</div>
<div class="yl" style="top:394px">-175.0</div>
<div class="yl" style="top:415px">5.0</div>
<div class="yl" style="top:429px">-5.0</div>
<div class="yl" style="top:443px">-15.0</div>
<div class="yl" style="top:457px">-25.0</div>
<div class="yl" style="top:471px">-35.0</div>
<div class="yl" style="top:485px">-45.0</div>
<div class="yl" style="top:499px">-55.0</div>
<div class="yl" style="top:514px">-65.0</div>
<div class="yl" style="top:528px">-75.0</div>
<div class="yl" style="top:542px">-85.0</div>
<div class="yl" style="top:556px">-95.0</div>
<div class="yl" style="top:570px">-105.0</div>
<div class="yl" style="top:584px">-115.0</div>
<div class="yl" style="top:599px">-125.0</div>
<div class="yl" style="top:613px">-135.0</div>
<div class="yl" style="top:627px">-145.0</div>
<div class="yl" style="top:641px">-155.0</div>
<div class="yl" style="top:655px">-165.0</div>
<div class="yl" style="top:669px">-175.0</div>
<div class="xl" style="left:80px;top:680px">7</div>
<div class="xl" style="left:112px;top:680px">10</div>
<div class="xl" style="left:173px;top:680px">20</div>
<div class="xl" style="left:208px;top:680px">30</div>
<div class="xl" style="left:253px;top:680px">50</div>
<div class="xl" style="left:283px;top:680px">70</div>
<div class="xl" style="left:314px;top:680px">100</div>
<div class="xl" style="left:376px;top:680px">200</div>
<div class="xl" style="left:411px;top:680px">300</div>
<div class="xl" style="left:456px;top:680px">500</div>
<div class="xl" style="left:486px;top:680px">700</div>
<div class="xl" style="left:517px;top:680px">1.0k</div>
<div class="xl" style="left:578px;top:680px">2.0k</div>
<div class="xl" style="left:614px;top:680px">3.0k</div>
<div class="xl" style="left:659px;top:680px">5.0k</div>
<div class="xl" style="left:689px;top:680px">7.0k</div>
<div class="xl" style="left:720px;top:680px">10.0k</div>
<div class="xl" style="left:781px;top:680px">20.0k</div>
<div class="xl" style="left:842px;top:680px">40.0k</div>
<div class="xl" style="left:878px;top:680px">60.0k</div>
<div class="xl" style="left:914px;top:680px">90.0k</div>
<div class="t" style="left:414px;top:692px;width:200px;text-align:center">Frequency (Hz)</div>
<div class="t" style="left:-23px;top:272px;width:80px;text-align:center;letter-spacing:0.75px;transform:rotate(-90deg)">dBV rms</div>
<div class="t" style="left:-23px;top:547px;width:80px;text-align:center;letter-spacing:0.75px;transform:rotate(-90deg)">dBV rms</div>
<div class="t" style="left:947px;top:132px;text-decoration:underline">Overlays</div>
<div class="t" style="left:914px;top:148px;width:40px;text-align:center;transform:rotate(-90deg)">Set</div>
<div class="t" style="left:928px;top:149px;width:40px;text-align:center;transform:rotate(-90deg)">On</div>
<div class="sb" style="left:926px;top:167px">1</div>
<div class="cb" style="left:943px;top:168px"></div>
<div class="t" style="left:959px;top:168px;color:#ff0000;letter-spacing:-0.2px">Overlay 1</div>
<div class="sb" style="left:926px;top:183px">2</div>
<div class="cb" style="left:943px;top:184px"></div>
<div class="t" style="left:959px;top:184px;color:#ff00ff;letter-spacing:-0.2px">Overlay 2</div>
<div class="sb" style="left:926px;top:199px">3</div>
<div class="cb" style="left:943px;top:200px"></div>
<div class="t" style="left:959px;top:200px;color:#0000ff;letter-spacing:-0.2px">Overlay 3</div>
<div class="sb" style="left:926px;top:215px">4</div>
<div class="cb" style="left:943px;top:216px"></div>
<div class="t" style="left:959px;top:216px;color:#00ffff;letter-spacing:-0.2px">Overlay 4</div>
<div class="abs" style="left:923px;top:232px;width:64px;height:18px;box-sizing:border-box;border:1px solid;border-style:solid;border-width:1px 2px 2px 1px;border-color:#fff #858585 #858585 #fff;background:#f0eef2;text-align:center;line-height:16px;font-size:12px">Options...</div>
<div class="t" style="left:914px;top:423px;width:40px;text-align:center;transform:rotate(-90deg)">Set</div>
<div class="t" style="left:928px;top:424px;width:40px;text-align:center;transform:rotate(-90deg)">On</div>
<div class="sb" style="left:926px;top:442px">1</div>
<div class="cb" style="left:943px;top:443px"></div>
<div class="t" style="left:959px;top:443px;color:#ff0000;letter-spacing:-0.2px">Overlay 1</div>
<div class="sb" style="left:926px;top:458px">2</div>
<div class="cb" style="left:943px;top:459px"></div>
<div class="t" style="left:959px;top:459px;color:#ff00ff;letter-spacing:-0.2px">Overlay 2</div>
<div class="sb" style="left:926px;top:474px">3</div>
<div class="cb" style="left:943px;top:475px"></div>
<div class="t" style="left:959px;top:475px;color:#0000ff;letter-spacing:-0.2px">Overlay 3</div>
<div class="sb" style="left:926px;top:490px">4</div>
<div class="cb" style="left:943px;top:491px"></div>
<div class="t" style="left:959px;top:491px;color:#00ffff;letter-spacing:-0.2px">Overlay 4</div>
<div class="abs" style="left:923px;top:507px;width:64px;height:18px;box-sizing:border-box;border:1px solid;border-style:solid;border-width:1px 2px 2px 1px;border-color:#fff #858585 #858585 #fff;background:#f0eef2;text-align:center;line-height:16px;font-size:12px">Options...</div>
<div class="abs" style="left:5px;top:705px;width:1018px;height:1px;background:#f8f6fa"></div>
<div class="abs" style="left:5px;top:708px;width:1018px;height:19px;background:#eeecf0"></div>
<div class="abs" style="left:4px;top:706px;width:1019px;height:1px;background:#000"></div>
<div class="abs" style="left:5px;top:707px;width:1018px;height:1px;background:#fff"></div>
<div class="sp" style="left:8px;width:118px"></div><div class="abs" style="left:9px;top:711px;width:113px;height:16px;background:#fbe7fb"></div>
<div class="abs" style="left:10px;top:712px;width:12px;height:5px;background:#00ff00"></div><div class="abs" style="left:10px;top:719px;width:12px;height:5px;background:#00ff00"></div>
<div class="abs" style="left:24px;top:712px;width:12px;height:5px;background:#00ff00"></div><div class="abs" style="left:24px;top:719px;width:12px;height:5px;background:#00ff00"></div>
<div class="abs" style="left:38px;top:712px;width:12px;height:5px;background:#00ff00"></div><div class="abs" style="left:38px;top:719px;width:12px;height:5px;background:#00ff00"></div>
<div class="abs" style="left:52px;top:712px;width:12px;height:5px;background:#00ff00"></div><div class="abs" style="left:52px;top:719px;width:12px;height:5px;background:#00ff00"></div>
<div class="abs" style="left:66px;top:712px;width:12px;height:5px;background:#00ff00"></div><div class="abs" style="left:66px;top:719px;width:12px;height:5px;background:#00ff00"></div>
<div class="abs" style="left:80px;top:712px;width:12px;height:5px;background:#ffff00"></div><div class="abs" style="left:80px;top:719px;width:12px;height:5px;background:#ffff00"></div>
<div class="abs" style="left:94px;top:712px;width:12px;height:5px;background:#ffff00"></div><div class="abs" style="left:94px;top:719px;width:12px;height:5px;background:#ffff00"></div>
<div class="abs" style="left:108px;top:712px;width:12px;height:5px;background:#ffff00"></div><div class="abs" style="left:108px;top:719px;width:12px;height:5px;background:#ffff00"></div>
<div class="sp" style="left:128px;width:101px"><span>Real Time</span></div>
<div class="sp" style="left:231px;width:71px"><span>192000 Hz</span></div>
<div class="sp" style="left:304px;width:51px"><span>24 Bit</span></div>
<div class="sp" style="left:357px;width:61px"><span>Stereo</span></div>
<div class="sp" style="left:420px;width:101px"><span>FFT 65536 pts</span></div>
<div class="sp" style="left:523px;width:73px"><span>Hanning</span></div>
</div></body></html>
